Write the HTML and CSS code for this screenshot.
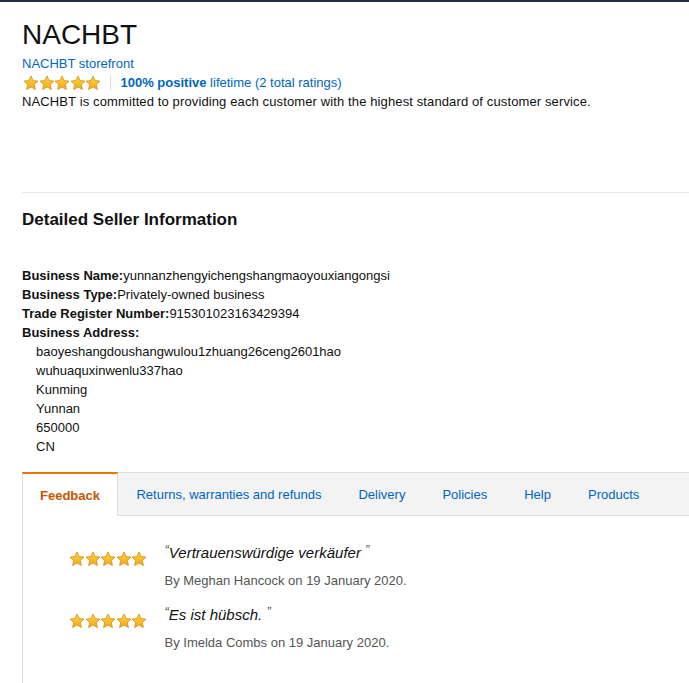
FILE: index.html
```html
<!DOCTYPE html>
<html lang="en">
  <head>
    <meta charset="UTF-8" />
    <title>NACHBT storefront</title>
    <link rel="stylesheet" href="styles.css">
  </head>
  <body>
    <svg width="0" height="0" class="defs">
      <defs>
        <linearGradient id="gold" x1="0" y1="0" x2="0" y2="1">
          <stop offset="0" stop-color="#ffd84a" />
          <stop offset="1" stop-color="#f3a517" />
        </linearGradient>
        <symbol id="star" viewBox="0 0 16 16">
          <polygon points="8,1 10.1,5.6 15,6.1 11.3,9.4 12.4,14.5 8,11.9 3.6,14.5 4.7,9.4 1,6.1 5.9,5.6"
            fill="url(#gold)" stroke="#d98b0f" stroke-width="0.8" stroke-linejoin="round" />
        </symbol>
      </defs>
    </svg>

    <div class="topbar"></div>

    <div class="page">
      <div class="seller-head">
        <h1>NACHBT</h1>
        <a class="link storefront" href="#">NACHBT storefront</a>
        <div class="rating-row">
          <span class="stars">
            <svg><use href="#star" /></svg><svg><use href="#star" /></svg><svg><use href="#star" /></svg><svg><use href="#star" /></svg><svg><use href="#star" /></svg>
          </span>
          <span class="sep"></span>
          <a class="link" href="#"><b>100% positive</b> lifetime (2 total ratings)</a>
        </div>
        <p class="about">NACHBT is committed to providing each customer with the highest standard of customer service.</p>
      </div>

      <hr class="divider" />

      <h2>Detailed Seller Information</h2>

      <div class="details">
        <div><b>Business Name:</b>yunnanzhengyichengshangmaoyouxiangongsi</div>
        <div><b>Business Type:</b>Privately-owned business</div>
        <div><b>Trade Register Number:</b>915301023163429394</div>
        <div><b>Business Address:</b></div>
        <div class="address">
          <div>baoyeshangdoushangwulou1zhuang26ceng2601hao</div>
          <div>wuhuaquxinwenlu337hao</div>
          <div>Kunming</div>
          <div>Yunnan</div>
          <div>650000</div>
          <div>CN</div>
        </div>
      </div>

      <div class="tabs">
        <a class="tab active" href="#">Feedback</a>
        <a class="tab" href="#">Returns, warranties and refunds</a>
        <a class="tab" href="#">Delivery</a>
        <a class="tab" href="#">Policies</a>
        <a class="tab" href="#">Help</a>
        <a class="tab" href="#">Products</a>
        <span class="tab-fill"></span>
      </div>

      <div class="tab-body">
        <div class="review">
          <span class="stars">
            <svg><use href="#star" /></svg><svg><use href="#star" /></svg><svg><use href="#star" /></svg><svg><use href="#star" /></svg><svg><use href="#star" /></svg>
          </span>
          <div class="review-text">
            <div class="quote"><span class="qm">&ldquo;</span>Vertrauenswürdige verkäufer <span class="qm">&rdquo;</span></div>
            <div class="by">By Meghan Hancock on 19 January 2020.</div>
          </div>
        </div>
        <div class="review">
          <span class="stars">
            <svg><use href="#star" /></svg><svg><use href="#star" /></svg><svg><use href="#star" /></svg><svg><use href="#star" /></svg><svg><use href="#star" /></svg>
          </span>
          <div class="review-text">
            <div class="quote"><span class="qm">&ldquo;</span>Es ist hübsch. <span class="qm">&rdquo;</span></div>
            <div class="by">By Imelda Combs on 19 January 2020.</div>
          </div>
        </div>
      </div>
    </div>
  </body>
</html>
```

FILE: styles.css
```css
* {
  margin: 0;
  padding: 0;
  box-sizing: border-box;
}

body {
  font-family: "Liberation Sans", Arial, sans-serif;
  font-size: 13px;
  line-height: 19px;
  color: #111;
  background: #fff;
  width: 689px;
  height: 683px;
  overflow: hidden;
}

.defs {
  position: absolute;
}

.topbar {
  height: 2px;
  background: #232f3e;
}

.page {
  padding-left: 22px;
}

.link {
  color: #0066c0;
  text-decoration: none;
}

/* Seller header */
.seller-head {
  padding-top: 15px;
}

h1 {
  font-size: 28px;
  font-weight: 400;
  line-height: 36px;
  margin-bottom: 1px;
}

.storefront {
  display: block;
}

.rating-row {
  display: flex;
  align-items: center;
  height: 19px;
}

.stars {
  display: inline-flex;
}

.stars svg {
  width: 16px;
  height: 16px;
  margin-right: -0.5px;
}

.rating-row .stars {
  margin-left: 1px;
}

.sep {
  width: 1px;
  height: 14px;
  background: #ddd;
  margin: 0 10px 0 9px;
}

.about {
  letter-spacing: 0.12px;
}

.divider {
  border: 0;
  border-top: 1px solid #e7e7e7;
  margin-top: 81px;
}

h2 {
  font-size: 17px;
  font-weight: 700;
  line-height: 24px;
  margin-top: 15px;
}

/* Business details */
.details {
  margin-top: 34px;
}

.address {
  padding-left: 14px;
}

/* Tabs */
.tabs {
  display: flex;
  margin-top: 16px;
  height: 44px;
}

.tab {
  display: flex;
  align-items: center;
  padding: 0 18.5px;
  background: #f3f3f3;
  border-top: 1px solid #ddd;
  border-bottom: 1px solid #ddd;
  color: #0066c0;
  text-decoration: none;
  white-space: nowrap;
}

.tab.active {
  background: #fff;
  border-top: 2px solid #e77600;
  border-bottom: 0;
  border-left: 1px solid #ddd;
  border-right: 1px solid #ddd;
  padding: 0 17px;
  color: #c45500;
  font-weight: 700;
}

.tab-fill {
  flex: 1;
  background: #f3f3f3;
  border-top: 1px solid #ddd;
  border-bottom: 1px solid #ddd;
}

.tab-body {
  border-left: 1px solid #ddd;
  height: 180px;
  padding: 22px 0 0 46px;
}

/* Reviews */
.review {
  display: flex;
  gap: 18px;
  margin-bottom: 9px;
}

.review .stars {
  margin-top: 13px;
  height: 16px;
}

.quote {
  font-size: 15px;
  font-style: italic;
  line-height: 24px;
}

.qm {
  font-size: 13px;
  vertical-align: 4px;
  color: #555;
}

.by {
  color: #555;
  line-height: 20px;
  margin-top: 6px;
}
```
